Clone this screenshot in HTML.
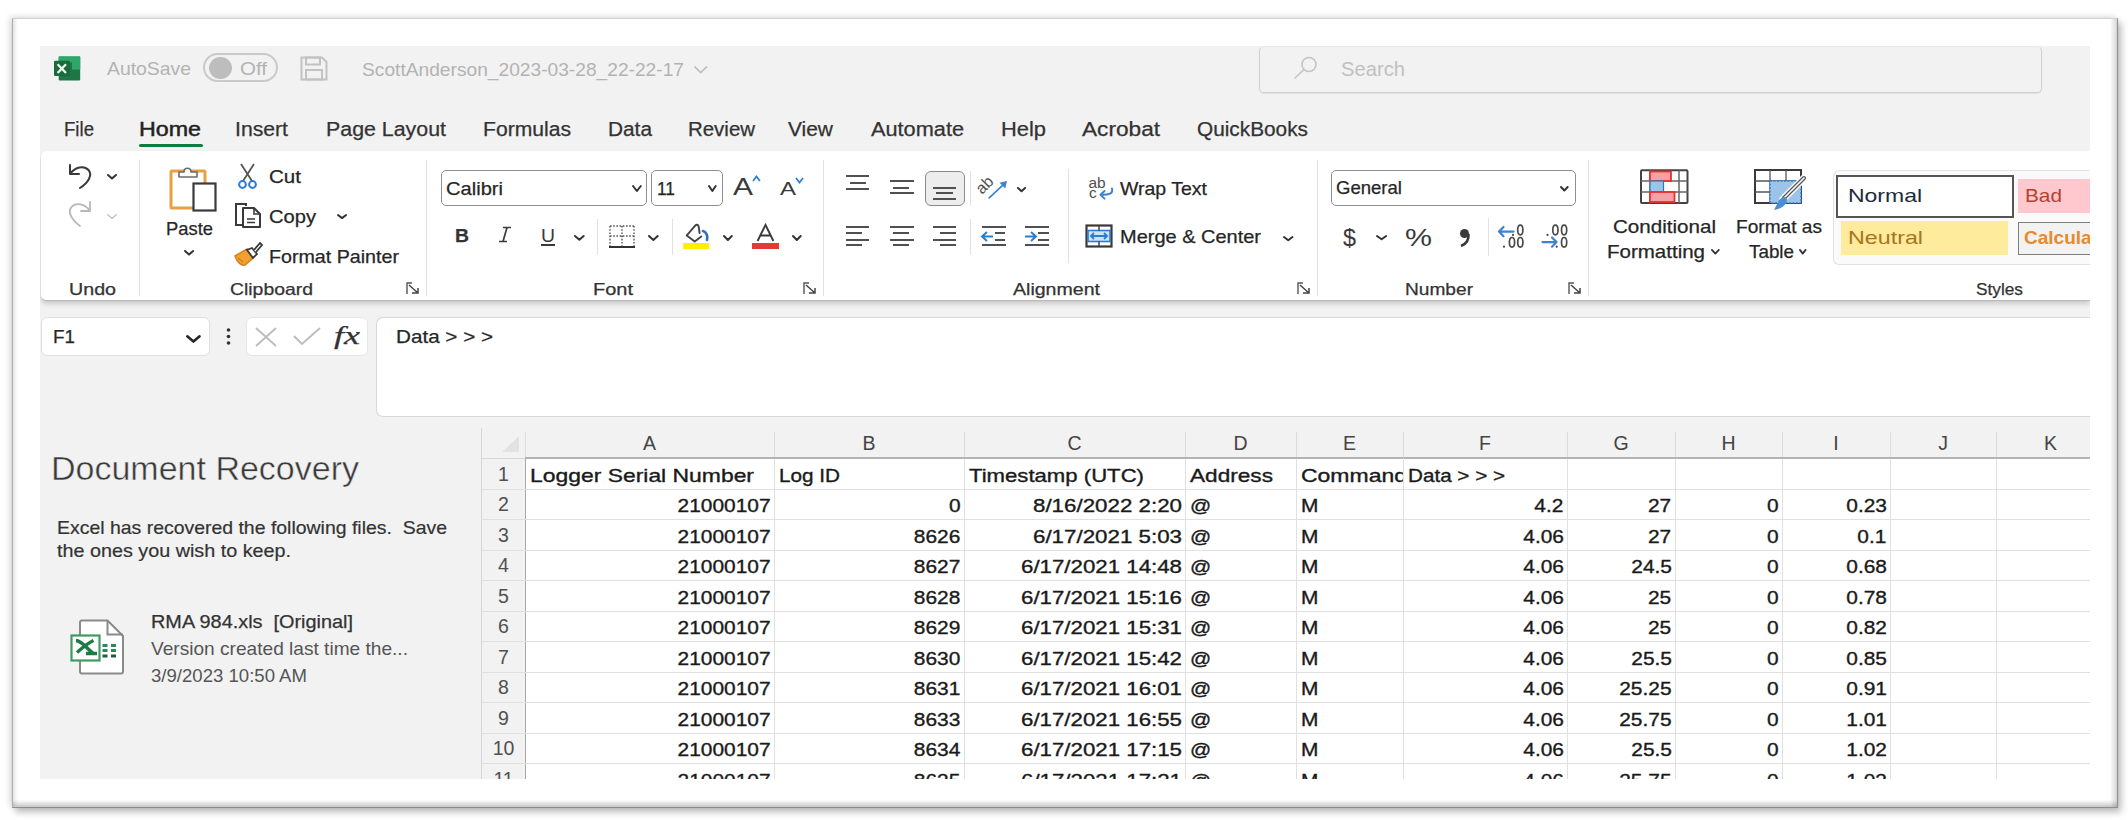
<!DOCTYPE html><html><head><meta charset="utf-8"><title>Excel</title><style>
html,body{margin:0;padding:0;}
body{width:2128px;height:820px;overflow:hidden;position:relative;background:#fff;font-family:"Liberation Sans",sans-serif;}
.a{position:absolute;}
.t{position:absolute;white-space:nowrap;line-height:1;transform-origin:0 0;}
svg.a{overflow:visible;}
</style></head><body>
<div class="a" style="left:12px;top:18px;width:2106px;height:790px;background:#fff;border:1px solid #8e8e8e;border-top-color:#d2d2d2;border-left-color:#acacac;box-shadow:3px 4px 7px rgba(0,0,0,.28),-3px -2px 6px rgba(0,0,0,.10);box-sizing:border-box;"></div>
<div class="a" style="left:13px;top:19px;width:5px;height:787px;background:linear-gradient(90deg,rgba(0,0,0,.10),rgba(0,0,0,0));"></div>
<div class="a" style="left:2110px;top:19px;width:7px;height:788px;background:linear-gradient(270deg,rgba(0,0,0,.16),rgba(0,0,0,0));"></div>
<div class="a" style="left:13px;top:800px;width:2104px;height:7px;background:linear-gradient(0deg,rgba(0,0,0,.22),rgba(0,0,0,0));"></div>
<div class="a" style="left:0;top:0;width:2128px;height:820px;clip-path:inset(46px 38px 41px 40px);">
<div class="a" style="left:40px;top:46px;width:2050px;height:733px;background:#f2f2f2;"></div>
<svg class="a" style="left:53px;top:56px;" width="28" height="25" viewBox="0 0 28 25">
<rect x="5.7" y="0.6" width="21.5" height="24" rx="1" fill="#1f7546"/>
<path d="M5.7 0.6 H27.2 V13.5 H19 V6.5 H5.7 Z" fill="#2ea86a"/>
<rect x="1" y="4.7" width="16" height="15.3" rx="1" fill="#196b3b"/>
<path d="M4.6 8.3 L13 17 M13 8.3 L4.6 17" stroke="#eef7f0" stroke-width="2.3"/>
</svg>
<div class="t" style="left:107.0px;top:58.9px;font-size:19px;color:#b3b3b3;transform:scaleX(1.0193);">AutoSave</div>
<div class="a" style="left:203px;top:53px;width:75px;height:29px;border:2px solid #cacaca;border-radius:15px;box-sizing:border-box;"></div>
<div class="a" style="left:209px;top:56.5px;width:23px;height:22px;background:#bdbdbd;border-radius:50%;"></div>
<div class="t" style="left:240.0px;top:58.9px;font-size:19px;color:#b3b3b3;transform:scaleX(1.0800);">Off</div>
<svg class="a" style="left:300px;top:56px;" width="28" height="25" viewBox="0 0 28 25"><path d="M1.5 1.5 H22 L26.5 6 V23.5 H1.5 Z" fill="none" stroke="#c2c2c2" stroke-width="2"/><rect x="6" y="1.5" width="14" height="7" fill="none" stroke="#c2c2c2" stroke-width="2"/><rect x="6" y="14" width="16" height="9.5" fill="none" stroke="#c2c2c2" stroke-width="2"/></svg>
<div class="t" style="left:362.0px;top:59.9px;font-size:19px;color:#b3b3b3;transform:scaleX(1.0094);">ScottAnderson_2023-03-28_22-22-17</div>
<svg class="a" style="left:693px;top:64.7px;" width="15.5" height="9.5" viewBox="0 0 15.5 9.5"><path d="M1.9 1.9 L7.75 7.6 L13.6 1.9" fill="none" stroke="#c0c0c0" stroke-width="1.8" stroke-linecap="round" stroke-linejoin="round"/></svg>
<div class="a" style="left:1259px;top:46px;width:783px;height:47px;border:1px solid #d0d0d0;border-top-color:#e8e8e8;border-radius:5px;box-shadow:0 1px 1px rgba(0,0,0,.08);box-sizing:border-box;"></div>
<svg class="a" style="left:1292px;top:55px;" width="26" height="26" viewBox="0 0 26 26"><circle cx="17" cy="9.5" r="7" fill="none" stroke="#c4c4c4" stroke-width="1.6"/><path d="M12 14.5 L3 23" stroke="#c4c4c4" stroke-width="1.6" stroke-linecap="round"/></svg>
<div class="t" style="left:1341.0px;top:59.5px;font-size:19.5px;color:#c0c0c0;transform:scaleX(1.0357);">Search</div>
<div class="t" style="left:64.0px;top:119.5px;font-size:19.5px;color:#333;-webkit-text-stroke:0.25px #333;transform:scaleX(0.9547);">File</div>
<div class="t" style="left:139.0px;top:119.5px;font-size:19.5px;color:#222;-webkit-text-stroke:0.45px #222;transform:scaleX(1.1916);">Home</div>
<div class="t" style="left:235.0px;top:119.5px;font-size:19.5px;color:#333;-webkit-text-stroke:0.25px #333;transform:scaleX(1.0865);">Insert</div>
<div class="t" style="left:326.0px;top:119.5px;font-size:19.5px;color:#333;-webkit-text-stroke:0.25px #333;transform:scaleX(1.0957);">Page Layout</div>
<div class="t" style="left:483.0px;top:119.5px;font-size:19.5px;color:#333;-webkit-text-stroke:0.25px #333;transform:scaleX(1.0827);">Formulas</div>
<div class="t" style="left:608.0px;top:119.5px;font-size:19.5px;color:#333;-webkit-text-stroke:0.25px #333;transform:scaleX(1.0679);">Data</div>
<div class="t" style="left:688.0px;top:119.5px;font-size:19.5px;color:#333;-webkit-text-stroke:0.25px #333;transform:scaleX(1.0479);">Review</div>
<div class="t" style="left:788.0px;top:119.5px;font-size:19.5px;color:#333;-webkit-text-stroke:0.25px #333;transform:scaleX(1.0734);">View</div>
<div class="t" style="left:871.0px;top:119.5px;font-size:19.5px;color:#333;-webkit-text-stroke:0.25px #333;transform:scaleX(1.1142);">Automate</div>
<div class="t" style="left:1001.0px;top:119.5px;font-size:19.5px;color:#333;-webkit-text-stroke:0.25px #333;transform:scaleX(1.1219);">Help</div>
<div class="t" style="left:1082.0px;top:119.5px;font-size:19.5px;color:#333;-webkit-text-stroke:0.25px #333;transform:scaleX(1.1607);">Acrobat</div>
<div class="t" style="left:1197.0px;top:119.5px;font-size:19.5px;color:#333;-webkit-text-stroke:0.25px #333;transform:scaleX(1.0668);">QuickBooks</div>
<div class="a" style="left:139px;top:144px;width:64px;height:3px;background:#107c41;border-radius:1.5px;"></div>
<div class="a" style="left:41px;top:151px;width:2049px;height:148.5px;background:#fff;border-radius:6px 0 0 5px;box-shadow:0 1px 1px rgba(0,0,0,.12),0 4px 5px rgba(0,0,0,.16);"></div>
<div class="a" style="left:139px;top:160px;width:1px;height:136px;background:#e1e1e1;"></div>
<div class="a" style="left:426px;top:160px;width:1px;height:136px;background:#e1e1e1;"></div>
<div class="a" style="left:823px;top:160px;width:1px;height:136px;background:#e1e1e1;"></div>
<div class="a" style="left:1317px;top:160px;width:1px;height:136px;background:#e1e1e1;"></div>
<div class="a" style="left:1588px;top:160px;width:1px;height:136px;background:#e1e1e1;"></div>
<svg class="a" style="left:66px;top:162px;" width="28" height="28" viewBox="0 0 28 28"><path d="M4 3 V12 H13" fill="none" stroke="#3a3a3a" stroke-width="2" stroke-linecap="round" stroke-linejoin="round"/><path d="M4.5 11.5 C9 5 18 3 22.5 8 C27 13 22 21 14 26" fill="none" stroke="#3a3a3a" stroke-width="2" stroke-linecap="round"/></svg>
<svg class="a" style="left:105.7px;top:173px;" width="12.0" height="7.5" viewBox="0 0 12.0 7.5"><path d="M2.0 2.0 L6.0 5.5 L10.0 2.0" fill="none" stroke="#333" stroke-width="2" stroke-linecap="round" stroke-linejoin="round"/></svg>
<svg class="a" style="left:66px;top:198px;" width="28" height="30" viewBox="0 0 28 30"><path d="M24 4 V13 H15" fill="none" stroke="#b8b8b8" stroke-width="1.8" stroke-linecap="round" stroke-linejoin="round"/><path d="M23.5 12.5 C19 6 10 4 5.5 9 C1 14 6 22 14 28" fill="none" stroke="#b8b8b8" stroke-width="1.8" stroke-linecap="round"/></svg>
<svg class="a" style="left:106px;top:213px;" width="12" height="7" viewBox="0 0 12 7"><path d="M1.75 1.75 L6.0 5.25 L10.25 1.75" fill="none" stroke="#c4c4c4" stroke-width="1.5" stroke-linecap="round" stroke-linejoin="round"/></svg>
<div class="t" style="left:69.0px;top:281.0px;font-size:16.5px;color:#333;-webkit-text-stroke:0.25px #333;transform:scaleX(1.1913);">Undo</div>
<svg class="a" style="left:168px;top:164px;" width="50" height="48" viewBox="0 0 50 48">
<rect x="3" y="7" width="34" height="37" rx="1" fill="#fff" stroke="#e8a040" stroke-width="3"/>
<path d="M11 13 V8 H16 C16 3 23 3 23 8 H29 V13 Z" fill="#fff" stroke="#6b6b6b" stroke-width="1.6" stroke-linejoin="round"/>
<rect x="25.5" y="19.5" width="22" height="27" fill="#fff" stroke="#3a3a3a" stroke-width="2.2"/>
</svg>
<div class="t" style="left:166.0px;top:219.4px;font-size:19px;color:#262626;-webkit-text-stroke:0.25px #262626;transform:scaleX(0.9672);">Paste</div>
<svg class="a" style="left:182.8px;top:249px;" width="12.099999999999994" height="7.599999999999994" viewBox="0 0 12.099999999999994 7.599999999999994"><path d="M2.0 2.0 L6.049999999999997 5.599999999999994 L10.099999999999994 2.0" fill="none" stroke="#333" stroke-width="2" stroke-linecap="round" stroke-linejoin="round"/></svg>
<svg class="a" style="left:237px;top:162px;" width="22" height="28" viewBox="0 0 22 28">
<path d="M4 2 L15 19 M17 2 L6 19" stroke="#555" stroke-width="1.8"/>
<circle cx="5.5" cy="22.5" r="3.4" fill="none" stroke="#2b7cd3" stroke-width="2"/>
<circle cx="15.5" cy="22.5" r="3.4" fill="none" stroke="#2b7cd3" stroke-width="2"/>
</svg>
<div class="t" style="left:269.0px;top:167.8px;font-size:18.5px;color:#262626;-webkit-text-stroke:0.25px #262626;transform:scaleX(1.1112);">Cut</div>
<svg class="a" style="left:233px;top:202px;" width="30" height="27" viewBox="0 0 30 27">
<path d="M13 4 V2 H3 V23 H9" fill="none" stroke="#3a3a3a" stroke-width="2"/>
<path d="M10 6 H21 L27 12 V25 H10 Z" fill="#fff" stroke="#3a3a3a" stroke-width="2" stroke-linejoin="round"/>
<path d="M21 6 V12 H27" fill="none" stroke="#3a3a3a" stroke-width="1.6"/>
<path d="M14 17 H22 M14 20.5 H22" stroke="#3a3a3a" stroke-width="1.4"/>
</svg>
<div class="t" style="left:269.0px;top:207.8px;font-size:18.5px;color:#262626;-webkit-text-stroke:0.25px #262626;transform:scaleX(1.0879);">Copy</div>
<svg class="a" style="left:335.5px;top:213.4px;" width="12.100000000000023" height="7.099999999999994" viewBox="0 0 12.100000000000023 7.099999999999994"><path d="M2.0 2.0 L6.050000000000011 5.099999999999994 L10.100000000000023 2.0" fill="none" stroke="#333" stroke-width="2" stroke-linecap="round" stroke-linejoin="round"/></svg>
<svg class="a" style="left:233px;top:241px;" width="30" height="27" viewBox="0 0 30 27">
<path d="M2 15 L14 8 L20 17 L12 24 C8 25 4 21 2 15 Z" fill="#f0a030" stroke="#d9821c" stroke-width="1.5"/>
<path d="M5 17 L10 21" stroke="#c46a00" stroke-width="1"/>
<path d="M14 9 L20 17 L24 13 L19 7 Z" fill="#fff" stroke="#3a3a3a" stroke-width="1.8"/>
<path d="M21 9 L27 2 L29 4 L23 11" fill="#fff" stroke="#3a3a3a" stroke-width="1.8"/>
</svg>
<div class="t" style="left:269.0px;top:248.1px;font-size:18.5px;color:#262626;-webkit-text-stroke:0.25px #262626;transform:scaleX(1.0624);">Format Painter</div>
<div class="t" style="left:230.0px;top:281.0px;font-size:16.5px;color:#333;-webkit-text-stroke:0.25px #333;transform:scaleX(1.1752);">Clipboard</div>
<svg class="a" style="left:406px;top:282px;" width="15" height="13" viewBox="0 0 15 13"><path d="M1 12 V1 H6 M1 1" fill="none" stroke="#555" stroke-width="1.4"/><path d="M3 3 L12 11 M6 11 H12 V6" fill="none" stroke="#444" stroke-width="1.5"/></svg>
<div class="a" style="left:441px;top:170px;width:206px;height:36px;border:1.3px solid #8f8f8f;border-radius:5px;box-sizing:border-box;background:#fff;"></div>
<div class="t" style="left:446.0px;top:178.9px;font-size:19px;color:#262626;-webkit-text-stroke:0.25px #262626;transform:scaleX(1.0583);">Calibri</div>
<svg class="a" style="left:630.7px;top:184px;" width="11.799999999999955" height="9" viewBox="0 0 11.799999999999955 9"><path d="M2.0 2.0 L5.899999999999977 7.0 L9.799999999999955 2.0" fill="none" stroke="#333" stroke-width="2" stroke-linecap="round" stroke-linejoin="round"/></svg>
<div class="a" style="left:651px;top:170px;width:72px;height:36px;border:1.3px solid #8f8f8f;border-radius:5px;box-sizing:border-box;background:#fff;"></div>
<div class="t" style="left:657.0px;top:178.9px;font-size:19px;color:#262626;-webkit-text-stroke:0.25px #262626;transform:scaleX(0.9121);">11</div>
<svg class="a" style="left:706.9px;top:184px;" width="10.700000000000045" height="9" viewBox="0 0 10.700000000000045 9"><path d="M2.0 2.0 L5.350000000000023 7.0 L8.700000000000045 2.0" fill="none" stroke="#333" stroke-width="2" stroke-linecap="round" stroke-linejoin="round"/></svg>
<div class="t" style="left:733.0px;top:174.7px;font-size:24px;color:#3a3a3a;transform:scaleX(1.2488);">A</div>
<svg class="a" style="left:752px;top:175px;" width="9" height="7" viewBox="0 0 9 7"><path d="M1 6 L4.5 1.5 L8 6" fill="none" stroke="#2b7cd3" stroke-width="1.7"/></svg>
<div class="t" style="left:780.0px;top:178.9px;font-size:19px;color:#3a3a3a;transform:scaleX(1.2611);">A</div>
<svg class="a" style="left:795px;top:177px;" width="9" height="7" viewBox="0 0 9 7"><path d="M1 1 L4.5 5.5 L8 1" fill="none" stroke="#2b7cd3" stroke-width="1.7"/></svg>
<div class="t" style="left:455.0px;top:225.9px;font-size:19px;color:#333;font-weight:700;-webkit-text-stroke:0.25px #333;transform:scaleX(1.0193);">B</div>
<svg class="a" style="left:497px;top:226px;" width="15" height="17" viewBox="0 0 15 17"><path d="M6 1.5 H14 M2 15.5 H10 M10 1.5 L6 15.5" fill="none" stroke="#3a3a3a" stroke-width="1.7"/></svg>
<div class="t" style="left:541.0px;top:225.9px;font-size:19px;color:#3a3a3a;transform:scaleX(1.0193);">U</div>
<div class="a" style="left:541px;top:244px;width:14px;height:1.6px;background:#3a3a3a;"></div>
<svg class="a" style="left:573.2px;top:233.9px;" width="12.699999999999932" height="7.799999999999983" viewBox="0 0 12.699999999999932 7.799999999999983"><path d="M2.0 2.0 L6.349999999999966 5.799999999999983 L10.699999999999932 2.0" fill="none" stroke="#333" stroke-width="2" stroke-linecap="round" stroke-linejoin="round"/></svg>
<div class="a" style="left:597px;top:219px;width:1px;height:36px;background:#e1e1e1;"></div>
<svg class="a" style="left:608px;top:224px;" width="28" height="25" viewBox="0 0 28 25">
<path d="M2 2 H26 M2 12 H26 M2 2 V22 M14 2 V22 M26 2 V22" fill="none" stroke="#555" stroke-width="1.4" stroke-dasharray="1.6 1.6"/>
<path d="M1 23 H27" stroke="#333" stroke-width="2"/>
</svg>
<svg class="a" style="left:647.3px;top:234px;" width="12.700000000000045" height="8" viewBox="0 0 12.700000000000045 8"><path d="M2.0 2.0 L6.350000000000023 6.0 L10.700000000000045 2.0" fill="none" stroke="#333" stroke-width="2" stroke-linecap="round" stroke-linejoin="round"/></svg>
<div class="a" style="left:672px;top:219px;width:1px;height:36px;background:#e1e1e1;"></div>
<svg class="a" style="left:682px;top:223px;" width="28" height="27" viewBox="0 0 28 27">
<path d="M4.8 12.4 L13 2.8 Q15.3 0.6 16.6 3.2 L17.6 10" fill="none" stroke="#444" stroke-width="1.9" stroke-linejoin="round" stroke-linecap="round"/>
<path d="M4.8 12.4 L12.7 18.6 L19.3 13.4" fill="none" stroke="#444" stroke-width="1.9" stroke-linejoin="round" stroke-linecap="round"/>
<path d="M21 8 C24.5 9 26 13 25 17" fill="none" stroke="#2f6fc0" stroke-width="2.6" stroke-linecap="round"/>
<rect x="1.2" y="20" width="26" height="6" fill="#ffee00"/>
</svg>
<svg class="a" style="left:721.5px;top:234px;" width="11.799999999999955" height="8" viewBox="0 0 11.799999999999955 8"><path d="M2.0 2.0 L5.899999999999977 6.0 L9.799999999999955 2.0" fill="none" stroke="#333" stroke-width="2" stroke-linecap="round" stroke-linejoin="round"/></svg>
<svg class="a" style="left:751px;top:223px;" width="29" height="27" viewBox="0 0 29 27"><path d="M6.6 18 L14.5 1.9 L22.4 18 M9.4 12.5 H19.6" fill="none" stroke="#3a3a3a" stroke-width="1.9"/><rect x="1" y="20" width="27" height="6" fill="#e63a30"/></svg>
<svg class="a" style="left:790.8px;top:234px;" width="11.700000000000045" height="8" viewBox="0 0 11.700000000000045 8"><path d="M2.0 2.0 L5.850000000000023 6.0 L9.700000000000045 2.0" fill="none" stroke="#333" stroke-width="2" stroke-linecap="round" stroke-linejoin="round"/></svg>
<div class="t" style="left:593.0px;top:281.0px;font-size:16.5px;color:#333;-webkit-text-stroke:0.25px #333;transform:scaleX(1.2110);">Font</div>
<svg class="a" style="left:803px;top:282px;" width="15" height="13" viewBox="0 0 15 13"><path d="M1 12 V1 H6 M1 1" fill="none" stroke="#555" stroke-width="1.4"/><path d="M3 3 L12 11 M6 11 H12 V6" fill="none" stroke="#444" stroke-width="1.5"/></svg>
<div class="a" style="left:846px;top:175px;width:23px;height:2px;background:#505050;"></div>
<div class="a" style="left:850px;top:182px;width:16px;height:2px;background:#505050;"></div>
<div class="a" style="left:846px;top:188px;width:23px;height:2px;background:#505050;"></div>
<div class="a" style="left:890px;top:180px;width:24px;height:2px;background:#505050;"></div>
<div class="a" style="left:893px;top:187px;width:16px;height:2px;background:#505050;"></div>
<div class="a" style="left:890px;top:192px;width:24px;height:2px;background:#505050;"></div>
<div class="a" style="left:924.5px;top:170.5px;width:40.5px;height:35.5px;background:#ededed;border:1.5px solid #8a8a8a;border-radius:6px;box-sizing:border-box;"></div>
<div class="a" style="left:933px;top:187px;width:23px;height:2px;background:#505050;"></div>
<div class="a" style="left:936px;top:192px;width:17px;height:2px;background:#505050;"></div>
<div class="a" style="left:933px;top:198px;width:23px;height:2px;background:#505050;"></div>
<div class="a" style="left:969.5px;top:171px;width:1px;height:35px;background:#e1e1e1;"></div>
<svg class="a" style="left:977px;top:172px;" width="32" height="28" viewBox="0 0 32 28">
<text x="0" y="0" transform="translate(5,23) rotate(-45)" font-family="Liberation Sans" font-size="16" fill="#505050">ab</text>
<path d="M12.2 25.9 L28.5 10.6" stroke="#3a84d0" stroke-width="1.7" stroke-linecap="round"/>
<path d="M30 9 L22.5 10.8 L28.2 16.5 Z" fill="#3a84d0"/>
</svg>
<svg class="a" style="left:1015.6px;top:185.6px;" width="11.100000000000023" height="7.200000000000017" viewBox="0 0 11.100000000000023 7.200000000000017"><path d="M2.0 2.0 L5.550000000000011 5.200000000000017 L9.100000000000023 2.0" fill="none" stroke="#333" stroke-width="2" stroke-linecap="round" stroke-linejoin="round"/></svg>
<div class="a" style="left:1068px;top:169px;width:1px;height:94px;background:#e1e1e1;"></div>
<div class="a" style="left:846px;top:226px;width:23px;height:2px;background:#505050;"></div>
<div class="a" style="left:846px;top:232px;width:16px;height:2px;background:#505050;"></div>
<div class="a" style="left:846px;top:239px;width:23px;height:2px;background:#505050;"></div>
<div class="a" style="left:846px;top:244px;width:16px;height:2px;background:#505050;"></div>
<div class="a" style="left:890px;top:226px;width:24px;height:2px;background:#505050;"></div>
<div class="a" style="left:893px;top:232px;width:16px;height:2px;background:#505050;"></div>
<div class="a" style="left:890px;top:239px;width:24px;height:2px;background:#505050;"></div>
<div class="a" style="left:893px;top:244px;width:16px;height:2px;background:#505050;"></div>
<div class="a" style="left:933px;top:226px;width:23px;height:2px;background:#505050;"></div>
<div class="a" style="left:940px;top:232px;width:16px;height:2px;background:#505050;"></div>
<div class="a" style="left:933px;top:239px;width:23px;height:2px;background:#505050;"></div>
<div class="a" style="left:940px;top:244px;width:16px;height:2px;background:#505050;"></div>
<div class="a" style="left:969.5px;top:219px;width:1px;height:36px;background:#e1e1e1;"></div>
<div class="a" style="left:982px;top:226px;width:24px;height:2px;background:#505050;"></div>
<div class="a" style="left:995px;top:232px;width:10px;height:2px;background:#505050;"></div>
<div class="a" style="left:995px;top:239px;width:10px;height:2px;background:#505050;"></div>
<div class="a" style="left:982px;top:244px;width:24px;height:2px;background:#505050;"></div>
<svg class="a" style="left:980px;top:230px;" width="14" height="13" viewBox="0 0 14 13"><path d="M2 6.5 H13 M7 2 L2 6.5 L7 11" fill="none" stroke="#2b7cd3" stroke-width="2"/></svg>
<div class="a" style="left:1025px;top:226px;width:24px;height:2px;background:#505050;"></div>
<div class="a" style="left:1038px;top:232px;width:11px;height:2px;background:#505050;"></div>
<div class="a" style="left:1038px;top:239px;width:11px;height:2px;background:#505050;"></div>
<div class="a" style="left:1025px;top:244px;width:24px;height:2px;background:#505050;"></div>
<svg class="a" style="left:1024px;top:230px;" width="14" height="13" viewBox="0 0 14 13"><path d="M1 6.5 H12 M7 2 L12 6.5 L7 11" fill="none" stroke="#2b7cd3" stroke-width="2"/></svg>
<svg class="a" style="left:1087px;top:174px;" width="28" height="28" viewBox="0 0 28 28">
<text x="1.5" y="14" font-family="Liberation Sans" font-size="15.5" fill="#505050">ab</text>
<text x="2" y="24" font-family="Liberation Sans" font-size="15.5" fill="#505050">c</text>
<path d="M25 14.5 C26.5 19.5 22 21 14 20.8" fill="none" stroke="#3a84d0" stroke-width="2" stroke-linecap="round"/>
<path d="M17.5 17 L13.5 20.8 L17.5 24.6" fill="none" stroke="#3a84d0" stroke-width="2" stroke-linecap="round" stroke-linejoin="round"/>
</svg>
<div class="t" style="left:1120.0px;top:179.5px;font-size:18.5px;color:#262626;-webkit-text-stroke:0.25px #262626;transform:scaleX(1.0531);">Wrap Text</div>
<svg class="a" style="left:1085px;top:224px;" width="28" height="24" viewBox="0 0 28 24">
<rect x="1.5" y="1.5" width="25" height="21" fill="#fff" stroke="#3a3a3a" stroke-width="2.2"/>
<rect x="3" y="6.5" width="22" height="11" fill="#cfe3f7" stroke="#2b7cd3" stroke-width="1.6"/>
<path d="M14 1.5 V6.5 M14 17.5 V22.5" stroke="#3a3a3a" stroke-width="1.4"/>
<path d="M6 12 H22 M9 9 L6 12 L9 15 M19 9 L22 12 L19 15" fill="none" stroke="#2b7cd3" stroke-width="1.8"/>
</svg>
<div class="t" style="left:1120.0px;top:228.3px;font-size:18.5px;color:#262626;-webkit-text-stroke:0.25px #262626;transform:scaleX(1.0797);">Merge &amp; Center</div>
<svg class="a" style="left:1281.5px;top:234.8px;" width="12.5" height="7.199999999999989" viewBox="0 0 12.5 7.199999999999989"><path d="M2.0 2.0 L6.25 5.199999999999989 L10.5 2.0" fill="none" stroke="#333" stroke-width="2" stroke-linecap="round" stroke-linejoin="round"/></svg>
<div class="t" style="left:1013.0px;top:281.0px;font-size:16.5px;color:#333;-webkit-text-stroke:0.25px #333;transform:scaleX(1.1857);">Alignment</div>
<svg class="a" style="left:1297px;top:282px;" width="15" height="13" viewBox="0 0 15 13"><path d="M1 12 V1 H6 M1 1" fill="none" stroke="#555" stroke-width="1.4"/><path d="M3 3 L12 11 M6 11 H12 V6" fill="none" stroke="#444" stroke-width="1.5"/></svg>
<div class="a" style="left:1331px;top:170px;width:245px;height:36px;border:1.3px solid #8f8f8f;border-radius:5px;box-sizing:border-box;background:#fff;"></div>
<div class="t" style="left:1336.0px;top:178.8px;font-size:18.5px;color:#262626;-webkit-text-stroke:0.25px #262626;transform:scaleX(1.0026);">General</div>
<svg class="a" style="left:1559.3px;top:184.6px;" width="10.700000000000045" height="7.5" viewBox="0 0 10.700000000000045 7.5"><path d="M2.0 2.0 L5.350000000000023 5.5 L8.700000000000045 2.0" fill="none" stroke="#333" stroke-width="2" stroke-linecap="round" stroke-linejoin="round"/></svg>
<div class="t" style="left:1343.0px;top:226.5px;font-size:23px;color:#3a3a3a;transform:scaleX(1.0159);">$</div>
<svg class="a" style="left:1375px;top:233.7px;" width="13.200000000000045" height="7.300000000000011" viewBox="0 0 13.200000000000045 7.300000000000011"><path d="M2.0 2.0 L6.600000000000023 5.300000000000011 L11.200000000000045 2.0" fill="none" stroke="#333" stroke-width="2" stroke-linecap="round" stroke-linejoin="round"/></svg>
<div class="t" style="left:1405.0px;top:225.7px;font-size:24px;color:#3a3a3a;transform:scaleX(1.2650);">%</div>
<svg class="a" style="left:1456px;top:227px;" width="16" height="20" viewBox="0 0 16 20"><circle cx="8.5" cy="6.5" r="4.5" fill="#3a3a3a"/><path d="M12.5 7 C13 13 10 17 5 19" fill="none" stroke="#3a3a3a" stroke-width="2.6"/></svg>
<div class="a" style="left:1488px;top:218px;width:1px;height:38px;background:#e1e1e1;"></div>
<svg class="a" style="left:1490px;top:218px;" width="90" height="36" viewBox="0 0 90 36"><ellipse cx="30.3" cy="12" rx="2.6" ry="4.8" fill="none" stroke="#4a4a4a" stroke-width="1.7"/><circle cx="23" cy="16.9" r="1.1" fill="#4a4a4a"/><circle cx="14" cy="28.7" r="1.1" fill="#4a4a4a"/><ellipse cx="22" cy="24.3" rx="2.6" ry="4.8" fill="none" stroke="#4a4a4a" stroke-width="1.7"/><ellipse cx="30.3" cy="24.3" rx="2.6" ry="4.8" fill="none" stroke="#4a4a4a" stroke-width="1.7"/><path d="M9 13.6 H23.5 M13.5 9 L9 13.6 L13.5 18.2" fill="none" stroke="#3a84d0" stroke-width="2.2" stroke-linejoin="round" stroke-linecap="round"/><circle cx="57.5" cy="16.9" r="1.1" fill="#4a4a4a"/><ellipse cx="65.4" cy="12" rx="2.6" ry="4.8" fill="none" stroke="#4a4a4a" stroke-width="1.7"/><ellipse cx="74.1" cy="12" rx="2.6" ry="4.8" fill="none" stroke="#4a4a4a" stroke-width="1.7"/><path d="M52.5 24.1 H66.5 M62 19.5 L66.5 24.1 L62 28.7" fill="none" stroke="#3a84d0" stroke-width="2.2" stroke-linejoin="round" stroke-linecap="round"/><ellipse cx="74.1" cy="24.3" rx="2.6" ry="4.8" fill="none" stroke="#4a4a4a" stroke-width="1.7"/><circle cx="66.7" cy="28.7" r="1.1" fill="#4a4a4a"/></svg>
<div class="t" style="left:1405.0px;top:281.0px;font-size:16.5px;color:#333;-webkit-text-stroke:0.25px #333;transform:scaleX(1.1587);">Number</div>
<svg class="a" style="left:1568px;top:282px;" width="15" height="13" viewBox="0 0 15 13"><path d="M1 12 V1 H6 M1 1" fill="none" stroke="#555" stroke-width="1.4"/><path d="M3 3 L12 11 M6 11 H12 V6" fill="none" stroke="#444" stroke-width="1.5"/></svg>
<svg class="a" style="left:1638px;top:168px;" width="52" height="38" viewBox="0 0 52 38">
<rect x="3" y="2.3" width="46.5" height="32.7" rx="1" fill="#fff" stroke="#444" stroke-width="2"/>
<path d="M3 13 H49.5 M3 24 H49.5 M41 2.3 V35 M12 2.3 V35" stroke="#666" stroke-width="1.5"/>
<rect x="12" y="3.5" width="21" height="9.5" fill="#f7a0a6" stroke="#e8312a" stroke-width="1.8"/>
<rect x="12" y="13" width="13.5" height="11" fill="#9cc3e8" stroke="#2f78c4" stroke-width="1.2"/>
<rect x="12" y="24" width="24.5" height="10" fill="#f7a0a6" stroke="#e8312a" stroke-width="1.8"/>
</svg>
<div class="t" style="left:1613.0px;top:218.3px;font-size:18.5px;color:#262626;-webkit-text-stroke:0.25px #262626;transform:scaleX(1.1126);">Conditional</div>
<div class="t" style="left:1606.5px;top:242.8px;font-size:18.5px;color:#262626;-webkit-text-stroke:0.25px #262626;transform:scaleX(1.1083);">Formatting</div>
<svg class="a" style="left:1710px;top:248px;" width="10.700000000000045" height="7.5" viewBox="0 0 10.700000000000045 7.5"><path d="M1.9 1.9 L5.350000000000023 5.6 L8.800000000000045 1.9" fill="none" stroke="#333" stroke-width="1.8" stroke-linecap="round" stroke-linejoin="round"/></svg>
<svg class="a" style="left:1753px;top:168px;" width="56" height="45" viewBox="0 0 56 45">
<rect x="2" y="2" width="46" height="33" fill="#fff" stroke="#3a3a3a" stroke-width="2"/>
<path d="M2 13 H48 M2 24 H48 M17 2 V35 M33 2 V35" stroke="#555" stroke-width="1.3"/>
<rect x="17" y="13" width="31" height="22" fill="#9cc3e8" stroke="#2b7cd3" stroke-width="1.3" stroke-dasharray="2 1.5"/>
<path d="M51 10 L30 31" stroke="#fff" stroke-width="7" stroke-linecap="round"/>
<path d="M51 10 L31 30" stroke="#555" stroke-width="4" stroke-linecap="round"/>
<path d="M51 10 L31 30" stroke="#fff" stroke-width="1.6" stroke-linecap="round"/>
<path d="M32 29 C26 29 25 35 21 42 C28 41 34 37 34 31 Z" fill="#4a8fd6"/>
</svg>
<div class="t" style="left:1736.0px;top:218.3px;font-size:18.5px;color:#262626;-webkit-text-stroke:0.25px #262626;transform:scaleX(1.0326);">Format as</div>
<div class="t" style="left:1748.5px;top:242.8px;font-size:18.5px;color:#262626;-webkit-text-stroke:0.25px #262626;transform:scaleX(1.0173);">Table</div>
<svg class="a" style="left:1798.4px;top:248px;" width="9.5" height="7.5" viewBox="0 0 9.5 7.5"><path d="M1.9 1.9 L4.75 5.6 L7.6 1.9" fill="none" stroke="#333" stroke-width="1.8" stroke-linecap="round" stroke-linejoin="round"/></svg>
<div class="a" style="left:1833px;top:169.5px;width:257px;height:95px;border:1px solid #e2e2e2;border-right:none;border-radius:6px 0 0 6px;box-sizing:border-box;background:#fafafa;"></div>
<div class="a" style="left:1835.5px;top:174.5px;width:178px;height:43px;background:#fff;border:2px solid #555;box-sizing:border-box;"></div>
<div class="t" style="left:1848.0px;top:185.9px;font-size:19px;color:#1c2a3a;transform:scaleX(1.2085);">Normal</div>
<div class="a" style="left:2018px;top:178.5px;width:72px;height:34px;background:#ffc7ce;"></div>
<div class="t" style="left:2025.0px;top:185.9px;font-size:19px;color:#b8402f;transform:scaleX(1.0943);">Bad</div>
<div class="a" style="left:1840.5px;top:221px;width:167px;height:33.5px;background:#ffeb9c;"></div>
<div class="t" style="left:1848.0px;top:227.9px;font-size:19px;color:#a8741f;transform:scaleX(1.2245);">Neutral</div>
<div class="a" style="left:2018px;top:222px;width:72px;height:32.5px;background:#f2f2f2;border:1.5px solid #7f7f7f;border-right:none;box-sizing:border-box;"></div>
<div class="t" style="left:2024.0px;top:227.9px;font-size:19px;color:#e8892a;font-weight:700;">Calculation</div>
<div class="t" style="left:1976.0px;top:281.0px;font-size:16.5px;color:#333;-webkit-text-stroke:0.25px #333;transform:scaleX(1.0459);">Styles</div>
<div class="a" style="left:41px;top:317px;width:169px;height:39px;background:#fff;border:1px solid #e0e0e0;border-radius:6px;box-sizing:border-box;"></div>
<div class="t" style="left:53.0px;top:327.8px;font-size:18.5px;color:#262626;-webkit-text-stroke:0.25px #262626;transform:scaleX(1.0188);">F1</div>
<svg class="a" style="left:184.7px;top:333.9px;" width="16.900000000000006" height="9.900000000000034" viewBox="0 0 16.900000000000006 9.900000000000034"><path d="M2.3 2.3 L8.450000000000003 7.600000000000034 L14.600000000000005 2.3" fill="none" stroke="#262626" stroke-width="2.6" stroke-linecap="round" stroke-linejoin="round"/></svg>
<svg class="a" style="left:225px;top:327px;" width="7" height="19" viewBox="0 0 7 19"><circle cx="3.5" cy="3" r="1.8" fill="#333"/><circle cx="3.5" cy="9.5" r="1.8" fill="#333"/><circle cx="3.5" cy="16" r="1.8" fill="#333"/></svg>
<div class="a" style="left:246px;top:317px;width:122px;height:39px;background:#fff;border:1px solid #e6e6e6;border-radius:6px;box-sizing:border-box;"></div>
<svg class="a" style="left:254px;top:326px;" width="25" height="22" viewBox="0 0 25 22"><path d="M2 2 L22 20 M22 2 L2 20" stroke="#bdbdbd" stroke-width="2"/></svg>
<svg class="a" style="left:292px;top:326px;" width="30" height="20" viewBox="0 0 30 20"><path d="M2 10 L10 18 L28 2" fill="none" stroke="#bdbdbd" stroke-width="2"/></svg>
<div class="t" style="left:334.0px;top:323.0px;font-size:26px;color:#333;font-family:'Liberation Serif', serif;-webkit-text-stroke:0.25px #333;font-style:italic;transform:scaleX(1.3855);">fx</div>
<div class="a" style="left:376px;top:317px;width:1720px;height:100px;background:#fff;border:1px solid #d8d8d8;border-right:none;border-radius:7px 0 0 7px;box-sizing:border-box;"></div>
<div class="t" style="left:396.0px;top:327.8px;font-size:18.5px;color:#262626;-webkit-text-stroke:0.25px #262626;transform:scaleX(1.1159);">Data &gt; &gt; &gt;</div>
<div class="a" style="left:481px;top:428px;width:1px;height:351px;background:#d6d6d6;"></div>
<div class="t" style="left:51.0px;top:451.6px;font-size:33.5px;color:#3a3a3a;-webkit-text-stroke:0.45px #f2f2f2;transform:scaleX(1.0149);">Document Recovery</div>
<div class="t" style="left:57.0px;top:519.3px;font-size:18.5px;color:#333;-webkit-text-stroke:0.2px #333;white-space:pre;transform:scaleX(1.0505);">Excel has recovered the following files.  Save</div>
<div class="t" style="left:57.0px;top:541.8px;font-size:18.5px;color:#333;-webkit-text-stroke:0.2px #333;transform:scaleX(1.0682);">the ones you wish to keep.</div>
<svg class="a" style="left:66px;top:618px;" width="62" height="60" viewBox="0 0 62 60">
<path d="M16 2.5 H41.5 L57 18 V53.5 Q57 55.5 55 55.5 H16 Q14 55.5 14 53.5 V4.5 Q14 2.5 16 2.5 Z" fill="#fff" stroke="#8a8a8a" stroke-width="2" stroke-linejoin="round"/>
<path d="M41.5 2.5 V16.5 H57" fill="none" stroke="#8a8a8a" stroke-width="2"/>
<rect x="5.5" y="17.5" width="28" height="25" fill="#fff" stroke="#3d9a64" stroke-width="2.2"/>
<path d="M10 22.5 C16 23 20 30 27.5 35.5 M27.5 22.5 C22 25 16 30 11 34.5 M20 35.5 H31" fill="none" stroke="#1e7a45" stroke-width="3.4"/>
<rect x="36.5" y="26" width="5" height="3" fill="#2a8a55"/><rect x="45" y="26" width="5" height="3" fill="#2a8a55"/>
<rect x="36.5" y="31" width="5" height="3" fill="#2a8a55"/><rect x="45" y="31" width="5" height="3" fill="#2a8a55"/>
<rect x="36.5" y="36.5" width="5" height="3" fill="#1b5e38"/><rect x="45" y="36.5" width="5" height="3" fill="#1b5e38"/>
</svg>
<div class="t" style="left:151.0px;top:612.8px;font-size:18.5px;color:#333;-webkit-text-stroke:0.25px #333;white-space:pre;transform:scaleX(1.0736);">RMA 984.xls  [Original]</div>
<div class="t" style="left:151.0px;top:639.8px;font-size:18.5px;color:#555;transform:scaleX(1.0327);">Version created last time the...</div>
<div class="t" style="left:151.0px;top:667.3px;font-size:18.5px;color:#555;transform:scaleX(1.0043);">3/9/2023 10:50 AM</div>
<div class="a" style="left:525px;top:458px;width:1565px;height:321px;background:#fff;"></div>
<svg class="a" style="left:500px;top:435px;" width="20" height="18" viewBox="0 0 20 18"><path d="M19 1 V17 H2 Z" fill="#e2e2e2"/></svg>
<div class="a" style="left:525px;top:431.5px;width:1px;height:26.5px;background:#dcdcdc;"></div>
<div class="a" style="left:774px;top:431.5px;width:1px;height:26.5px;background:#dcdcdc;"></div>
<div class="a" style="left:964px;top:431.5px;width:1px;height:26.5px;background:#dcdcdc;"></div>
<div class="a" style="left:1185px;top:431.5px;width:1px;height:26.5px;background:#dcdcdc;"></div>
<div class="a" style="left:1296px;top:431.5px;width:1px;height:26.5px;background:#dcdcdc;"></div>
<div class="a" style="left:1403px;top:431.5px;width:1px;height:26.5px;background:#dcdcdc;"></div>
<div class="a" style="left:1567px;top:431.5px;width:1px;height:26.5px;background:#dcdcdc;"></div>
<div class="a" style="left:1675px;top:431.5px;width:1px;height:26.5px;background:#dcdcdc;"></div>
<div class="a" style="left:1782px;top:431.5px;width:1px;height:26.5px;background:#dcdcdc;"></div>
<div class="a" style="left:1890px;top:431.5px;width:1px;height:26.5px;background:#dcdcdc;"></div>
<div class="a" style="left:1996px;top:431.5px;width:1px;height:26.5px;background:#dcdcdc;"></div>
<div class="a" style="left:774px;top:458px;width:1px;height:321px;background:#e0e0e0;"></div>
<div class="a" style="left:964px;top:458px;width:1px;height:321px;background:#e0e0e0;"></div>
<div class="a" style="left:1185px;top:458px;width:1px;height:321px;background:#e0e0e0;"></div>
<div class="a" style="left:1296px;top:458px;width:1px;height:321px;background:#e0e0e0;"></div>
<div class="a" style="left:1403px;top:458px;width:1px;height:321px;background:#e0e0e0;"></div>
<div class="a" style="left:1567px;top:458px;width:1px;height:321px;background:#e0e0e0;"></div>
<div class="a" style="left:1675px;top:458px;width:1px;height:321px;background:#e0e0e0;"></div>
<div class="a" style="left:1782px;top:458px;width:1px;height:321px;background:#e0e0e0;"></div>
<div class="a" style="left:1890px;top:458px;width:1px;height:321px;background:#e0e0e0;"></div>
<div class="a" style="left:1996px;top:458px;width:1px;height:321px;background:#e0e0e0;"></div>
<div class="a" style="left:524.5px;top:458px;width:1.5px;height:321px;background:#a8a8a8;"></div>
<div class="a" style="left:482px;top:488.5px;width:1608px;height:1px;background:#e0e0e0;"></div>
<div class="a" style="left:482px;top:519.0px;width:1608px;height:1px;background:#e0e0e0;"></div>
<div class="a" style="left:482px;top:549.5px;width:1608px;height:1px;background:#e0e0e0;"></div>
<div class="a" style="left:482px;top:580.0px;width:1608px;height:1px;background:#e0e0e0;"></div>
<div class="a" style="left:482px;top:610.5px;width:1608px;height:1px;background:#e0e0e0;"></div>
<div class="a" style="left:482px;top:641.0px;width:1608px;height:1px;background:#e0e0e0;"></div>
<div class="a" style="left:482px;top:671.5px;width:1608px;height:1px;background:#e0e0e0;"></div>
<div class="a" style="left:482px;top:702.0px;width:1608px;height:1px;background:#e0e0e0;"></div>
<div class="a" style="left:482px;top:732.5px;width:1608px;height:1px;background:#e0e0e0;"></div>
<div class="a" style="left:482px;top:763.0px;width:1608px;height:1px;background:#e0e0e0;"></div>
<div class="a" style="left:525px;top:457px;width:1565px;height:2px;background:#b4b4b4;"></div>
<div class="a" style="left:482px;top:458px;width:43px;height:1px;background:#d6d6d6;"></div>
<div class="t" style="left:649.5px;top:433.5px;font-size:19.5px;color:#444;transform:translateX(-50%);">A</div>
<div class="t" style="left:869.0px;top:433.5px;font-size:19.5px;color:#444;transform:translateX(-50%);">B</div>
<div class="t" style="left:1074.5px;top:433.5px;font-size:19.5px;color:#444;transform:translateX(-50%);">C</div>
<div class="t" style="left:1240.5px;top:433.5px;font-size:19.5px;color:#444;transform:translateX(-50%);">D</div>
<div class="t" style="left:1349.5px;top:433.5px;font-size:19.5px;color:#444;transform:translateX(-50%);">E</div>
<div class="t" style="left:1485.0px;top:433.5px;font-size:19.5px;color:#444;transform:translateX(-50%);">F</div>
<div class="t" style="left:1621.0px;top:433.5px;font-size:19.5px;color:#444;transform:translateX(-50%);">G</div>
<div class="t" style="left:1728.5px;top:433.5px;font-size:19.5px;color:#444;transform:translateX(-50%);">H</div>
<div class="t" style="left:1836.0px;top:433.5px;font-size:19.5px;color:#444;transform:translateX(-50%);">I</div>
<div class="t" style="left:1943.0px;top:433.5px;font-size:19.5px;color:#444;transform:translateX(-50%);">J</div>
<div class="t" style="left:2050.5px;top:433.5px;font-size:19.5px;color:#444;transform:translateX(-50%);">K</div>
<div class="t" style="left:503.5px;top:464.5px;font-size:19.5px;color:#505050;transform:translateX(-50%);">1</div>
<div class="t" style="left:503.5px;top:495.0px;font-size:19.5px;color:#505050;transform:translateX(-50%);">2</div>
<div class="t" style="left:503.5px;top:525.5px;font-size:19.5px;color:#505050;transform:translateX(-50%);">3</div>
<div class="t" style="left:503.5px;top:556.0px;font-size:19.5px;color:#505050;transform:translateX(-50%);">4</div>
<div class="t" style="left:503.5px;top:586.5px;font-size:19.5px;color:#505050;transform:translateX(-50%);">5</div>
<div class="t" style="left:503.5px;top:617.0px;font-size:19.5px;color:#505050;transform:translateX(-50%);">6</div>
<div class="t" style="left:503.5px;top:647.5px;font-size:19.5px;color:#505050;transform:translateX(-50%);">7</div>
<div class="t" style="left:503.5px;top:678.0px;font-size:19.5px;color:#505050;transform:translateX(-50%);">8</div>
<div class="t" style="left:503.5px;top:708.5px;font-size:19.5px;color:#505050;transform:translateX(-50%);">9</div>
<div class="t" style="left:503.5px;top:739.0px;font-size:19.5px;color:#505050;transform:translateX(-50%);">10</div>
<div class="t" style="left:503.5px;top:769.5px;font-size:19.5px;color:#505050;transform:translateX(-50%);">11</div>
<div class="t" style="left:530.0px;top:465.5px;font-size:19px;color:#1a1a1a;-webkit-text-stroke:0.35px #1a1a1a;transform:scaleX(1.2051);">Logger Serial Number</div>
<div class="t" style="left:779.0px;top:465.5px;font-size:19px;color:#1a1a1a;-webkit-text-stroke:0.35px #1a1a1a;transform:scaleX(1.0896);">Log ID</div>
<div class="t" style="left:969.0px;top:465.5px;font-size:19px;color:#1a1a1a;-webkit-text-stroke:0.35px #1a1a1a;transform:scaleX(1.1647);">Timestamp (UTC)</div>
<div class="t" style="left:1190.0px;top:465.5px;font-size:19px;color:#1a1a1a;-webkit-text-stroke:0.35px #1a1a1a;transform:scaleX(1.1908);">Address</div>
<div class="t" style="left:1301.0px;top:465.5px;font-size:19px;color:#1a1a1a;-webkit-text-stroke:0.35px #1a1a1a;transform:scaleX(1.2093);">Command</div>
<div class="a" style="left:0;top:0;width:2128px;height:779px;overflow:hidden;">
<div class="t" style="right:1357.5px;top:496.1px;font-size:19px;color:#1a1a1a;-webkit-text-stroke:0.35px #1a1a1a;transform:scaleX(1.1);transform-origin:100% 0;">21000107</div>
<div class="t" style="right:1167.5px;top:496.1px;font-size:19px;color:#1a1a1a;-webkit-text-stroke:0.35px #1a1a1a;transform:scaleX(1.1);transform-origin:100% 0;">0</div>
<div class="t" style="left:1032.5px;top:496.1px;font-size:19px;color:#1a1a1a;-webkit-text-stroke:0.35px #1a1a1a;transform:scaleX(1.1751);">8/16/2022 2:20</div>
<div class="t" style="left:1190.0px;top:496.1px;font-size:19px;color:#1a1a1a;-webkit-text-stroke:0.35px #1a1a1a;transform:scaleX(1.1);">@</div>
<div class="t" style="left:1301.0px;top:496.1px;font-size:19px;color:#1a1a1a;-webkit-text-stroke:0.35px #1a1a1a;transform:scaleX(1.1);">M</div>
<div class="t" style="right:564.5px;top:496.1px;font-size:19px;color:#1a1a1a;-webkit-text-stroke:0.35px #1a1a1a;transform:scaleX(1.1);transform-origin:100% 0;">4.2</div>
<div class="t" style="right:456.5px;top:496.1px;font-size:19px;color:#1a1a1a;-webkit-text-stroke:0.35px #1a1a1a;transform:scaleX(1.1);transform-origin:100% 0;">27</div>
<div class="t" style="right:349.5px;top:496.1px;font-size:19px;color:#1a1a1a;-webkit-text-stroke:0.35px #1a1a1a;transform:scaleX(1.1);transform-origin:100% 0;">0</div>
<div class="t" style="right:241.5px;top:496.1px;font-size:19px;color:#1a1a1a;-webkit-text-stroke:0.35px #1a1a1a;transform:scaleX(1.1);transform-origin:100% 0;">0.23</div>
<div class="t" style="right:1357.5px;top:526.6px;font-size:19px;color:#1a1a1a;-webkit-text-stroke:0.35px #1a1a1a;transform:scaleX(1.1);transform-origin:100% 0;">21000107</div>
<div class="t" style="right:1167.5px;top:526.6px;font-size:19px;color:#1a1a1a;-webkit-text-stroke:0.35px #1a1a1a;transform:scaleX(1.1);transform-origin:100% 0;">8626</div>
<div class="t" style="left:1032.5px;top:526.6px;font-size:19px;color:#1a1a1a;-webkit-text-stroke:0.35px #1a1a1a;transform:scaleX(1.1751);">6/17/2021 5:03</div>
<div class="t" style="left:1190.0px;top:526.6px;font-size:19px;color:#1a1a1a;-webkit-text-stroke:0.35px #1a1a1a;transform:scaleX(1.1);">@</div>
<div class="t" style="left:1301.0px;top:526.6px;font-size:19px;color:#1a1a1a;-webkit-text-stroke:0.35px #1a1a1a;transform:scaleX(1.1);">M</div>
<div class="t" style="right:564.5px;top:526.6px;font-size:19px;color:#1a1a1a;-webkit-text-stroke:0.35px #1a1a1a;transform:scaleX(1.1);transform-origin:100% 0;">4.06</div>
<div class="t" style="right:456.5px;top:526.6px;font-size:19px;color:#1a1a1a;-webkit-text-stroke:0.35px #1a1a1a;transform:scaleX(1.1);transform-origin:100% 0;">27</div>
<div class="t" style="right:349.5px;top:526.6px;font-size:19px;color:#1a1a1a;-webkit-text-stroke:0.35px #1a1a1a;transform:scaleX(1.1);transform-origin:100% 0;">0</div>
<div class="t" style="right:241.5px;top:526.6px;font-size:19px;color:#1a1a1a;-webkit-text-stroke:0.35px #1a1a1a;transform:scaleX(1.1);transform-origin:100% 0;">0.1</div>
<div class="t" style="right:1357.5px;top:557.1px;font-size:19px;color:#1a1a1a;-webkit-text-stroke:0.35px #1a1a1a;transform:scaleX(1.1);transform-origin:100% 0;">21000107</div>
<div class="t" style="right:1167.5px;top:557.1px;font-size:19px;color:#1a1a1a;-webkit-text-stroke:0.35px #1a1a1a;transform:scaleX(1.1);transform-origin:100% 0;">8627</div>
<div class="t" style="left:1020.5px;top:557.1px;font-size:19px;color:#1a1a1a;-webkit-text-stroke:0.35px #1a1a1a;transform:scaleX(1.1721);">6/17/2021 14:48</div>
<div class="t" style="left:1190.0px;top:557.1px;font-size:19px;color:#1a1a1a;-webkit-text-stroke:0.35px #1a1a1a;transform:scaleX(1.1);">@</div>
<div class="t" style="left:1301.0px;top:557.1px;font-size:19px;color:#1a1a1a;-webkit-text-stroke:0.35px #1a1a1a;transform:scaleX(1.1);">M</div>
<div class="t" style="right:564.5px;top:557.1px;font-size:19px;color:#1a1a1a;-webkit-text-stroke:0.35px #1a1a1a;transform:scaleX(1.1);transform-origin:100% 0;">4.06</div>
<div class="t" style="right:456.5px;top:557.1px;font-size:19px;color:#1a1a1a;-webkit-text-stroke:0.35px #1a1a1a;transform:scaleX(1.1);transform-origin:100% 0;">24.5</div>
<div class="t" style="right:349.5px;top:557.1px;font-size:19px;color:#1a1a1a;-webkit-text-stroke:0.35px #1a1a1a;transform:scaleX(1.1);transform-origin:100% 0;">0</div>
<div class="t" style="right:241.5px;top:557.1px;font-size:19px;color:#1a1a1a;-webkit-text-stroke:0.35px #1a1a1a;transform:scaleX(1.1);transform-origin:100% 0;">0.68</div>
<div class="t" style="right:1357.5px;top:587.6px;font-size:19px;color:#1a1a1a;-webkit-text-stroke:0.35px #1a1a1a;transform:scaleX(1.1);transform-origin:100% 0;">21000107</div>
<div class="t" style="right:1167.5px;top:587.6px;font-size:19px;color:#1a1a1a;-webkit-text-stroke:0.35px #1a1a1a;transform:scaleX(1.1);transform-origin:100% 0;">8628</div>
<div class="t" style="left:1020.5px;top:587.6px;font-size:19px;color:#1a1a1a;-webkit-text-stroke:0.35px #1a1a1a;transform:scaleX(1.1721);">6/17/2021 15:16</div>
<div class="t" style="left:1190.0px;top:587.6px;font-size:19px;color:#1a1a1a;-webkit-text-stroke:0.35px #1a1a1a;transform:scaleX(1.1);">@</div>
<div class="t" style="left:1301.0px;top:587.6px;font-size:19px;color:#1a1a1a;-webkit-text-stroke:0.35px #1a1a1a;transform:scaleX(1.1);">M</div>
<div class="t" style="right:564.5px;top:587.6px;font-size:19px;color:#1a1a1a;-webkit-text-stroke:0.35px #1a1a1a;transform:scaleX(1.1);transform-origin:100% 0;">4.06</div>
<div class="t" style="right:456.5px;top:587.6px;font-size:19px;color:#1a1a1a;-webkit-text-stroke:0.35px #1a1a1a;transform:scaleX(1.1);transform-origin:100% 0;">25</div>
<div class="t" style="right:349.5px;top:587.6px;font-size:19px;color:#1a1a1a;-webkit-text-stroke:0.35px #1a1a1a;transform:scaleX(1.1);transform-origin:100% 0;">0</div>
<div class="t" style="right:241.5px;top:587.6px;font-size:19px;color:#1a1a1a;-webkit-text-stroke:0.35px #1a1a1a;transform:scaleX(1.1);transform-origin:100% 0;">0.78</div>
<div class="t" style="right:1357.5px;top:618.1px;font-size:19px;color:#1a1a1a;-webkit-text-stroke:0.35px #1a1a1a;transform:scaleX(1.1);transform-origin:100% 0;">21000107</div>
<div class="t" style="right:1167.5px;top:618.1px;font-size:19px;color:#1a1a1a;-webkit-text-stroke:0.35px #1a1a1a;transform:scaleX(1.1);transform-origin:100% 0;">8629</div>
<div class="t" style="left:1020.5px;top:618.1px;font-size:19px;color:#1a1a1a;-webkit-text-stroke:0.35px #1a1a1a;transform:scaleX(1.1721);">6/17/2021 15:31</div>
<div class="t" style="left:1190.0px;top:618.1px;font-size:19px;color:#1a1a1a;-webkit-text-stroke:0.35px #1a1a1a;transform:scaleX(1.1);">@</div>
<div class="t" style="left:1301.0px;top:618.1px;font-size:19px;color:#1a1a1a;-webkit-text-stroke:0.35px #1a1a1a;transform:scaleX(1.1);">M</div>
<div class="t" style="right:564.5px;top:618.1px;font-size:19px;color:#1a1a1a;-webkit-text-stroke:0.35px #1a1a1a;transform:scaleX(1.1);transform-origin:100% 0;">4.06</div>
<div class="t" style="right:456.5px;top:618.1px;font-size:19px;color:#1a1a1a;-webkit-text-stroke:0.35px #1a1a1a;transform:scaleX(1.1);transform-origin:100% 0;">25</div>
<div class="t" style="right:349.5px;top:618.1px;font-size:19px;color:#1a1a1a;-webkit-text-stroke:0.35px #1a1a1a;transform:scaleX(1.1);transform-origin:100% 0;">0</div>
<div class="t" style="right:241.5px;top:618.1px;font-size:19px;color:#1a1a1a;-webkit-text-stroke:0.35px #1a1a1a;transform:scaleX(1.1);transform-origin:100% 0;">0.82</div>
<div class="t" style="right:1357.5px;top:648.6px;font-size:19px;color:#1a1a1a;-webkit-text-stroke:0.35px #1a1a1a;transform:scaleX(1.1);transform-origin:100% 0;">21000107</div>
<div class="t" style="right:1167.5px;top:648.6px;font-size:19px;color:#1a1a1a;-webkit-text-stroke:0.35px #1a1a1a;transform:scaleX(1.1);transform-origin:100% 0;">8630</div>
<div class="t" style="left:1020.5px;top:648.6px;font-size:19px;color:#1a1a1a;-webkit-text-stroke:0.35px #1a1a1a;transform:scaleX(1.1721);">6/17/2021 15:42</div>
<div class="t" style="left:1190.0px;top:648.6px;font-size:19px;color:#1a1a1a;-webkit-text-stroke:0.35px #1a1a1a;transform:scaleX(1.1);">@</div>
<div class="t" style="left:1301.0px;top:648.6px;font-size:19px;color:#1a1a1a;-webkit-text-stroke:0.35px #1a1a1a;transform:scaleX(1.1);">M</div>
<div class="t" style="right:564.5px;top:648.6px;font-size:19px;color:#1a1a1a;-webkit-text-stroke:0.35px #1a1a1a;transform:scaleX(1.1);transform-origin:100% 0;">4.06</div>
<div class="t" style="right:456.5px;top:648.6px;font-size:19px;color:#1a1a1a;-webkit-text-stroke:0.35px #1a1a1a;transform:scaleX(1.1);transform-origin:100% 0;">25.5</div>
<div class="t" style="right:349.5px;top:648.6px;font-size:19px;color:#1a1a1a;-webkit-text-stroke:0.35px #1a1a1a;transform:scaleX(1.1);transform-origin:100% 0;">0</div>
<div class="t" style="right:241.5px;top:648.6px;font-size:19px;color:#1a1a1a;-webkit-text-stroke:0.35px #1a1a1a;transform:scaleX(1.1);transform-origin:100% 0;">0.85</div>
<div class="t" style="right:1357.5px;top:679.1px;font-size:19px;color:#1a1a1a;-webkit-text-stroke:0.35px #1a1a1a;transform:scaleX(1.1);transform-origin:100% 0;">21000107</div>
<div class="t" style="right:1167.5px;top:679.1px;font-size:19px;color:#1a1a1a;-webkit-text-stroke:0.35px #1a1a1a;transform:scaleX(1.1);transform-origin:100% 0;">8631</div>
<div class="t" style="left:1020.5px;top:679.1px;font-size:19px;color:#1a1a1a;-webkit-text-stroke:0.35px #1a1a1a;transform:scaleX(1.1721);">6/17/2021 16:01</div>
<div class="t" style="left:1190.0px;top:679.1px;font-size:19px;color:#1a1a1a;-webkit-text-stroke:0.35px #1a1a1a;transform:scaleX(1.1);">@</div>
<div class="t" style="left:1301.0px;top:679.1px;font-size:19px;color:#1a1a1a;-webkit-text-stroke:0.35px #1a1a1a;transform:scaleX(1.1);">M</div>
<div class="t" style="right:564.5px;top:679.1px;font-size:19px;color:#1a1a1a;-webkit-text-stroke:0.35px #1a1a1a;transform:scaleX(1.1);transform-origin:100% 0;">4.06</div>
<div class="t" style="right:456.5px;top:679.1px;font-size:19px;color:#1a1a1a;-webkit-text-stroke:0.35px #1a1a1a;transform:scaleX(1.1);transform-origin:100% 0;">25.25</div>
<div class="t" style="right:349.5px;top:679.1px;font-size:19px;color:#1a1a1a;-webkit-text-stroke:0.35px #1a1a1a;transform:scaleX(1.1);transform-origin:100% 0;">0</div>
<div class="t" style="right:241.5px;top:679.1px;font-size:19px;color:#1a1a1a;-webkit-text-stroke:0.35px #1a1a1a;transform:scaleX(1.1);transform-origin:100% 0;">0.91</div>
<div class="t" style="right:1357.5px;top:709.6px;font-size:19px;color:#1a1a1a;-webkit-text-stroke:0.35px #1a1a1a;transform:scaleX(1.1);transform-origin:100% 0;">21000107</div>
<div class="t" style="right:1167.5px;top:709.6px;font-size:19px;color:#1a1a1a;-webkit-text-stroke:0.35px #1a1a1a;transform:scaleX(1.1);transform-origin:100% 0;">8633</div>
<div class="t" style="left:1020.5px;top:709.6px;font-size:19px;color:#1a1a1a;-webkit-text-stroke:0.35px #1a1a1a;transform:scaleX(1.1721);">6/17/2021 16:55</div>
<div class="t" style="left:1190.0px;top:709.6px;font-size:19px;color:#1a1a1a;-webkit-text-stroke:0.35px #1a1a1a;transform:scaleX(1.1);">@</div>
<div class="t" style="left:1301.0px;top:709.6px;font-size:19px;color:#1a1a1a;-webkit-text-stroke:0.35px #1a1a1a;transform:scaleX(1.1);">M</div>
<div class="t" style="right:564.5px;top:709.6px;font-size:19px;color:#1a1a1a;-webkit-text-stroke:0.35px #1a1a1a;transform:scaleX(1.1);transform-origin:100% 0;">4.06</div>
<div class="t" style="right:456.5px;top:709.6px;font-size:19px;color:#1a1a1a;-webkit-text-stroke:0.35px #1a1a1a;transform:scaleX(1.1);transform-origin:100% 0;">25.75</div>
<div class="t" style="right:349.5px;top:709.6px;font-size:19px;color:#1a1a1a;-webkit-text-stroke:0.35px #1a1a1a;transform:scaleX(1.1);transform-origin:100% 0;">0</div>
<div class="t" style="right:241.5px;top:709.6px;font-size:19px;color:#1a1a1a;-webkit-text-stroke:0.35px #1a1a1a;transform:scaleX(1.1);transform-origin:100% 0;">1.01</div>
<div class="t" style="right:1357.5px;top:740.1px;font-size:19px;color:#1a1a1a;-webkit-text-stroke:0.35px #1a1a1a;transform:scaleX(1.1);transform-origin:100% 0;">21000107</div>
<div class="t" style="right:1167.5px;top:740.1px;font-size:19px;color:#1a1a1a;-webkit-text-stroke:0.35px #1a1a1a;transform:scaleX(1.1);transform-origin:100% 0;">8634</div>
<div class="t" style="left:1020.5px;top:740.1px;font-size:19px;color:#1a1a1a;-webkit-text-stroke:0.35px #1a1a1a;transform:scaleX(1.1721);">6/17/2021 17:15</div>
<div class="t" style="left:1190.0px;top:740.1px;font-size:19px;color:#1a1a1a;-webkit-text-stroke:0.35px #1a1a1a;transform:scaleX(1.1);">@</div>
<div class="t" style="left:1301.0px;top:740.1px;font-size:19px;color:#1a1a1a;-webkit-text-stroke:0.35px #1a1a1a;transform:scaleX(1.1);">M</div>
<div class="t" style="right:564.5px;top:740.1px;font-size:19px;color:#1a1a1a;-webkit-text-stroke:0.35px #1a1a1a;transform:scaleX(1.1);transform-origin:100% 0;">4.06</div>
<div class="t" style="right:456.5px;top:740.1px;font-size:19px;color:#1a1a1a;-webkit-text-stroke:0.35px #1a1a1a;transform:scaleX(1.1);transform-origin:100% 0;">25.5</div>
<div class="t" style="right:349.5px;top:740.1px;font-size:19px;color:#1a1a1a;-webkit-text-stroke:0.35px #1a1a1a;transform:scaleX(1.1);transform-origin:100% 0;">0</div>
<div class="t" style="right:241.5px;top:740.1px;font-size:19px;color:#1a1a1a;-webkit-text-stroke:0.35px #1a1a1a;transform:scaleX(1.1);transform-origin:100% 0;">1.02</div>
<div class="t" style="right:1357.5px;top:770.6px;font-size:19px;color:#1a1a1a;-webkit-text-stroke:0.35px #1a1a1a;transform:scaleX(1.1);transform-origin:100% 0;">21000107</div>
<div class="t" style="right:1167.5px;top:770.6px;font-size:19px;color:#1a1a1a;-webkit-text-stroke:0.35px #1a1a1a;transform:scaleX(1.1);transform-origin:100% 0;">8635</div>
<div class="t" style="left:1020.5px;top:770.6px;font-size:19px;color:#1a1a1a;-webkit-text-stroke:0.35px #1a1a1a;transform:scaleX(1.1721);">6/17/2021 17:21</div>
<div class="t" style="left:1190.0px;top:770.6px;font-size:19px;color:#1a1a1a;-webkit-text-stroke:0.35px #1a1a1a;transform:scaleX(1.1);">@</div>
<div class="t" style="left:1301.0px;top:770.6px;font-size:19px;color:#1a1a1a;-webkit-text-stroke:0.35px #1a1a1a;transform:scaleX(1.1);">M</div>
<div class="t" style="right:564.5px;top:770.6px;font-size:19px;color:#1a1a1a;-webkit-text-stroke:0.35px #1a1a1a;transform:scaleX(1.1);transform-origin:100% 0;">4.06</div>
<div class="t" style="right:456.5px;top:770.6px;font-size:19px;color:#1a1a1a;-webkit-text-stroke:0.35px #1a1a1a;transform:scaleX(1.1);transform-origin:100% 0;">25.75</div>
<div class="t" style="right:349.5px;top:770.6px;font-size:19px;color:#1a1a1a;-webkit-text-stroke:0.35px #1a1a1a;transform:scaleX(1.1);transform-origin:100% 0;">0</div>
<div class="t" style="right:241.5px;top:770.6px;font-size:19px;color:#1a1a1a;-webkit-text-stroke:0.35px #1a1a1a;transform:scaleX(1.1);transform-origin:100% 0;">1.03</div>
</div>
<div class="a" style="left:1403.5px;top:459px;width:163px;height:29px;background:#fff;"></div>
<div class="t" style="left:1408.0px;top:465.5px;font-size:19px;color:#1a1a1a;-webkit-text-stroke:0.35px #1a1a1a;transform:scaleX(1.0866);">Data &gt; &gt; &gt;</div>
<div class="a" style="left:1403px;top:458px;width:1px;height:31px;background:#e0e0e0;"></div>
</div>
</body></html>
